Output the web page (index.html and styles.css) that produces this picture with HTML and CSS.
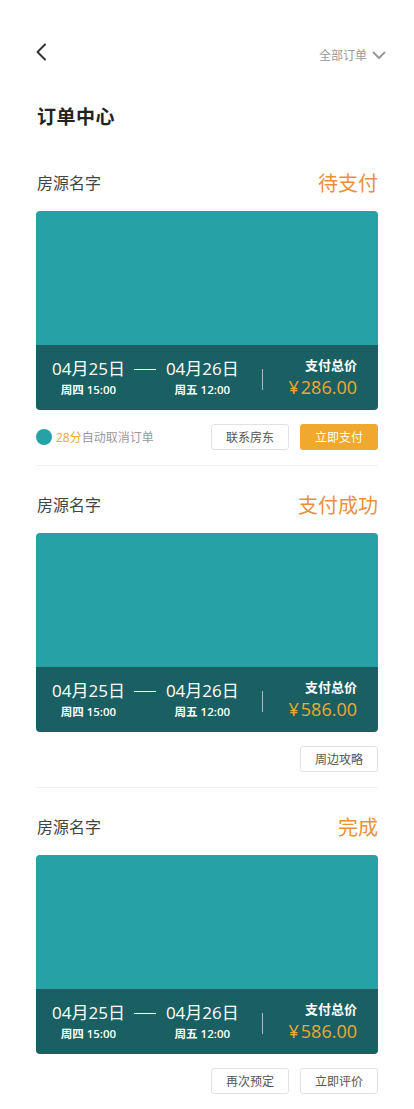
FILE: index.html
```html
<!DOCTYPE html>
<html lang="zh">
<head>
<meta charset="utf-8">
<link rel="stylesheet" href="styles.css">
</head>
<body>
<div class="page">
  <header class="topbar">
    <svg class="back" width="12" height="18" viewBox="0 0 12 18"><path d="M10 1.5 L2.5 9 L10 16.5" fill="none" stroke="#333" stroke-width="2" stroke-linecap="round" stroke-linejoin="round"/></svg>
    <div class="filter">全部订单<svg width="14" height="9" viewBox="0 0 14 9"><path d="M1.5 1.5 L7 7 L12.5 1.5" fill="none" stroke="#999" stroke-width="2" stroke-linecap="round" stroke-linejoin="round"/></svg></div>
  </header>
  <h1 class="title">订单中心</h1>

  <section class="card">
    <div class="card-head"><span class="name">房源名字</span><span class="status">待支付</span></div>
    <div class="cover">
      <div class="photo"></div>
      <div class="panel">
        <div class="dates">
          <div class="day"><div class="d">04月25日</div><div class="t">周四 15:00</div></div>
          <div class="dash"></div>
          <div class="day"><div class="d">04月26日</div><div class="t">周五 12:00</div></div>
        </div>
        <div class="vline"></div>
        <div class="price"><div class="pl">支付总价</div><div class="pv"><span class="yen">¥</span>286.00</div></div>
      </div>
    </div>
    <div class="actions">
      <div class="countdown"><span class="dot"></span><span class="min">28分</span>自动取消订单</div>
      <div class="btns"><button class="btn">联系房东</button><button class="btn primary">立即支付</button></div>
    </div>
  </section>

  <section class="card">
    <div class="card-head"><span class="name">房源名字</span><span class="status">支付成功</span></div>
    <div class="cover">
      <div class="photo"></div>
      <div class="panel">
        <div class="dates">
          <div class="day"><div class="d">04月25日</div><div class="t">周四 15:00</div></div>
          <div class="dash"></div>
          <div class="day"><div class="d">04月26日</div><div class="t">周五 12:00</div></div>
        </div>
        <div class="vline"></div>
        <div class="price"><div class="pl">支付总价</div><div class="pv"><span class="yen">¥</span>586.00</div></div>
      </div>
    </div>
    <div class="actions">
      <div class="countdown"></div>
      <div class="btns"><button class="btn">周边攻略</button></div>
    </div>
  </section>

  <section class="card last">
    <div class="card-head"><span class="name">房源名字</span><span class="status">完成</span></div>
    <div class="cover">
      <div class="photo"></div>
      <div class="panel">
        <div class="dates">
          <div class="day"><div class="d">04月25日</div><div class="t">周四 15:00</div></div>
          <div class="dash"></div>
          <div class="day"><div class="d">04月26日</div><div class="t">周五 12:00</div></div>
        </div>
        <div class="vline"></div>
        <div class="price"><div class="pl">支付总价</div><div class="pv"><span class="yen">¥</span>586.00</div></div>
      </div>
    </div>
    <div class="actions">
      <div class="countdown"></div>
      <div class="btns"><button class="btn">再次预定</button><button class="btn">立即评价</button></div>
    </div>
  </section>
</div>
</body>
</html>
```

FILE: styles.css
```css
* { box-sizing: border-box; }
html, body { margin: 0; padding: 0; background: #fff; }
body {
  font-family: "Open Sans", "Noto Sans CJK SC", sans-serif;
  color: #333;
}
.page { padding: 0 36px; }
.topbar {
  display: flex;
  align-items: center;
  justify-content: space-between;
  height: 30px;
  margin-top: 37px;
}
.back { display: block; margin-left: -1px; }
.filter {
  display: flex;
  align-items: center;
  gap: 5px;
  font-size: 12px;
  color: #999;
  margin-top: 6px;
  margin-right: -8px;
}
.filter svg { display: block; }
.title {
  margin: 37px 0 0 1px;
  font-size: 19px;
  line-height: 26px;
  font-weight: 700;
  color: #222;
  letter-spacing: 0.5px;
}
.card { padding-top: 20px; border-bottom: 1px solid #f1f3f3; padding-bottom: 16px; }
.card:first-of-type { padding-top: 34px; }
.card.last { border-bottom: none; }
.card-head {
  display: flex;
  align-items: center;
  justify-content: space-between;
  height: 36px;
  margin-bottom: 11px;
}
.name { font-size: 16px; color: #444; margin-left: 1px; }
.status { font-size: 20px; color: #e8913a; }
.cover { border-radius: 4px; overflow: hidden; }
.photo { height: 134px; background: #26a2a6; }
.panel {
  height: 65px;
  background: #1a5f61;
  display: flex;
  align-items: center;
  padding: 0 21px 0 16px;
  color: #fff;
}
.dates { display: flex; align-items: flex-start; }
.day { display: flex; flex-direction: column; align-items: center; }
.d { font-size: 17px; line-height: 22px; }
.t { font-size: 11.5px; line-height: 16px; font-weight: 600; margin-top: 2px; }
.dash { width: 22px; height: 1px; background: #fff; margin: 11px 10px 0 9px; }
.vline { width: 1px; height: 21px; background: rgba(255,255,255,0.6); margin-left: 23px; margin-top: 4px; }
.price { margin-left: auto; display: flex; flex-direction: column; align-items: flex-end; }
.pl { font-size: 13px; line-height: 18px; font-weight: 700; }
.pv { font-size: 18px; line-height: 23px; color: #f0a833; margin-top: 2px; }
.yen { margin-right: 2px; }
.actions {
  display: flex;
  align-items: center;
  justify-content: space-between;
  margin-top: 14px;
  height: 25px;
}
.countdown { display: flex; align-items: center; font-size: 12px; color: #999; }
.dot { width: 16px; height: 16px; border-radius: 50%; background: #26a2a6; margin-right: 4px; }
.min { color: #f0a833; }
.btns { display: flex; gap: 11px; }
.btn {
  width: 78px;
  height: 26px;
  border: 1px solid #e2e2e2;
  border-radius: 3px;
  background: #fff;
  font-family: "Noto Sans CJK SC", sans-serif;
  font-size: 12px;
  color: #555;
  padding: 0;
}
.btn.primary { background: #f0a82e; border-color: #f0a82e; color: #fff; }
```
